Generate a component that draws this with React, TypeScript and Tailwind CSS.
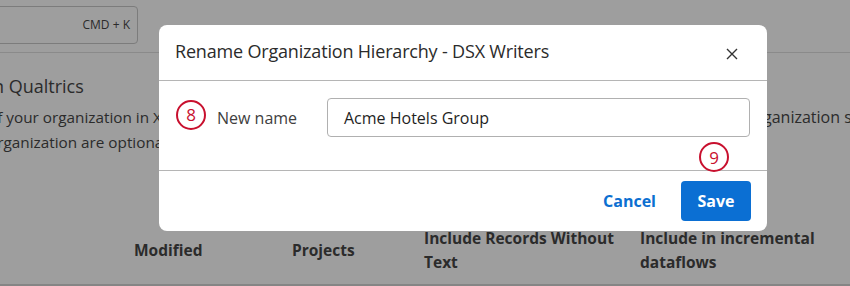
import React from "react";

function Badge({ n }: { n: string }) {
  return (
    <div className="w-[30px] h-[30px] rounded-full border-[2.5px] border-[#c8102e] bg-white flex items-center justify-center text-[#c8102e] text-[17px] leading-none">
      {n}
    </div>
  );
}

export default function App() {
  return (
    <div
      className="relative w-[850px] h-[286px] overflow-hidden bg-[#9e9e9e] text-[#2b2b2b]"
      style={{ fontFamily: '"Open Sans", "Noto Sans", sans-serif' }}
    >
      {/* Underlying page */}
      <div className="flex flex-col h-full">
        <div className="h-[53px] border-b border-[#8a8a8a] flex items-start pt-[6px]">
          <div className="-ml-[62px] w-[200px] h-[38px] border border-[#7c7c7c] rounded-[4px] flex items-center justify-end pr-[7px] text-[12px] text-[#2b2b2b]">
            CMD + K
          </div>
        </div>
        <div className="pt-[21px] whitespace-nowrap">
          <div className="text-[18px] leading-[24px] -ml-[7px]">n Qualtrics</div>
          <div className="mt-[7px] flex text-[15.3px] leading-[25px]">
            <div className="-ml-[12px]">
              <div>of your organization in XM</div>
              <div>organization are optional</div>
            </div>
            <div className="ml-auto w-[87px] overflow-hidden text-[16px]">ganization st</div>
          </div>
        </div>
        <div className="mt-auto border-b-2 border-[#858585] pb-[10px]">
          <div className="grid grid-cols-[134px_158px_132px_216px_1fr] items-center text-[15.5px] font-bold leading-[24px] text-[#2b2b2b]">
            <div></div>
            <div>Modified</div>
            <div>Projects</div>
            <div className="w-[200px]">Include Records Without Text</div>
            <div className="w-[180px]">Include in incremental dataflows</div>
          </div>
        </div>
      </div>

      {/* Modal */}
      <div className="absolute left-[159px] top-[25px] w-[608px] h-[206px] bg-white rounded-[8px] flex flex-col">
        <div className="h-[56px] flex items-center pl-[16px] pr-[29px] border-b border-[#b5b5b5]">
          <div className="text-[18px] tracking-[-0.01em] text-[#2b2b2b] flex-1 pb-[2px]">
            Rename Organization Hierarchy - DSX Writers
          </div>
          <svg width="12" height="12" viewBox="0 0 12 12" className="mt-[3px]">
            <path d="M1 1 L11 11 M11 1 L1 11" stroke="#333" strokeWidth="1.4" fill="none" />
          </svg>
        </div>
        <div className="relative h-[90px] border-b border-[#b5b5b5] pt-[17px] pl-[17px] pr-[17px]">
          <div className="flex items-center">
            <div className="-mt-[6px]">
              <Badge n="8" />
            </div>
            <div className="ml-[11px] w-[110px] text-[16px] text-[#404040]">New name</div>
            <div className="flex-1 h-[39px] border border-[#b0b0b0] rounded-[4px] flex items-center pl-[16px] text-[16px] text-[#1f1f1f]">
              Acme Hotels Group
            </div>
          </div>
          <div className="absolute left-[540px] top-[61px]">
            <Badge n="9" />
          </div>
        </div>
        <div className="flex-1 flex items-center justify-end pr-[16px] gap-[25px]">
          <div className="text-[16px] font-bold text-[#0b6fd1]">Cancel</div>
          <div className="w-[70px] h-[40px] rounded-[4px] bg-[#0b6fd3] text-white text-[16px] font-bold flex items-center justify-center">
            Save
          </div>
        </div>
      </div>
    </div>
  );
}
